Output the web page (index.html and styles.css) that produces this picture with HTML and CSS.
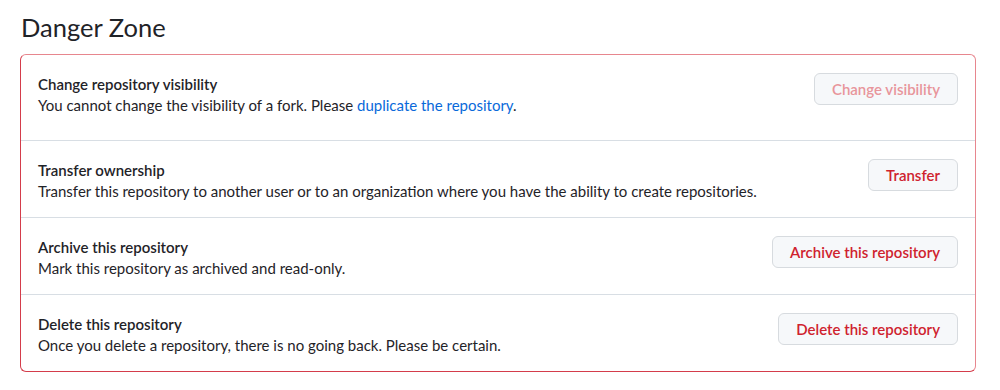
FILE: index.html
```html
<!DOCTYPE html>
<html lang="en">
<head>
    <meta charset="UTF-8">
    <meta name="viewport" content="width=device-width, initial-scale=1.0">
    <title>Danger Zone</title>
    <link rel="stylesheet" href="styles.css">
</head>
<body>

    <main class="settings">
        <h2 class="subhead">Danger Zone</h2>

        <ul class="danger-box">
            <li class="danger-row danger-row--first">
                <div class="row-text">
                    <strong class="row-title">Change repository visibility</strong>
                    <p class="row-desc">You cannot change the visibility of a fork. Please <a href="#">duplicate the repository</a>.</p>
                </div>
                <button class="btn-danger" disabled>Change visibility</button>
            </li>
            <li class="danger-row">
                <div class="row-text">
                    <strong class="row-title">Transfer ownership</strong>
                    <p class="row-desc">Transfer this repository to another user or to an organization where you have the ability to create repositories.</p>
                </div>
                <button class="btn-danger">Transfer</button>
            </li>
            <li class="danger-row">
                <div class="row-text">
                    <strong class="row-title">Archive this repository</strong>
                    <p class="row-desc">Mark this repository as archived and read-only.</p>
                </div>
                <button class="btn-danger">Archive this repository</button>
            </li>
            <li class="danger-row">
                <div class="row-text">
                    <strong class="row-title">Delete this repository</strong>
                    <p class="row-desc">Once you delete a repository, there is no going back. Please be certain.</p>
                </div>
                <button class="btn-danger">Delete this repository</button>
            </li>
        </ul>
    </main>

</body>
</html>
```

FILE: styles.css
```css
:root {
    --color-fg: #1f2328;
    --color-border: #d8dee4;
    --color-danger: #cf222e;
    --color-danger-muted: #e8959b;
    --color-link: #0969da;
    --color-btn-bg: #f6f8fa;
    --color-btn-border: #d7dbdf;
}
* { box-sizing: border-box; }
body { margin: 0; font-family: 'Lato', 'Liberation Sans', sans-serif; font-size: 15px; line-height: 21px; color: var(--color-fg); background: #fff; }
.settings { width: 976px; padding: 12px 0 0 20px; }
.subhead { margin: 0 0 12px 1px; font-size: 25.5px; line-height: 30px; font-weight: 400; }
.danger-box { list-style: none; margin: 0; padding: 0; border: 1px solid var(--color-danger); border-color: #e7868e #e7868e #d43d4b #d43d4b; border-radius: 6px; }
.danger-row { display: flex; justify-content: space-between; align-items: flex-start; gap: 16px; padding: 16px 17px 15px 17px; border-top: 1px solid var(--color-border); }
.danger-row:first-child { border-top: none; }
.danger-row--first { padding-bottom: 24px; }
.row-text { padding-top: 3px; }
.row-title { display: block; font-weight: 600; }
.row-desc { margin: 0; }
.row-desc a { color: var(--color-link); text-decoration: none; }
.btn-danger { flex-shrink: 0; margin-top: 2px; height: 32px; padding: 0 17px; font-family: inherit; font-size: 15px; font-weight: 600; color: var(--color-danger); background: var(--color-btn-bg); border: 1px solid var(--color-btn-border); border-radius: 6px; cursor: pointer; }
.btn-danger:disabled { color: var(--color-danger-muted); cursor: default; }
```
